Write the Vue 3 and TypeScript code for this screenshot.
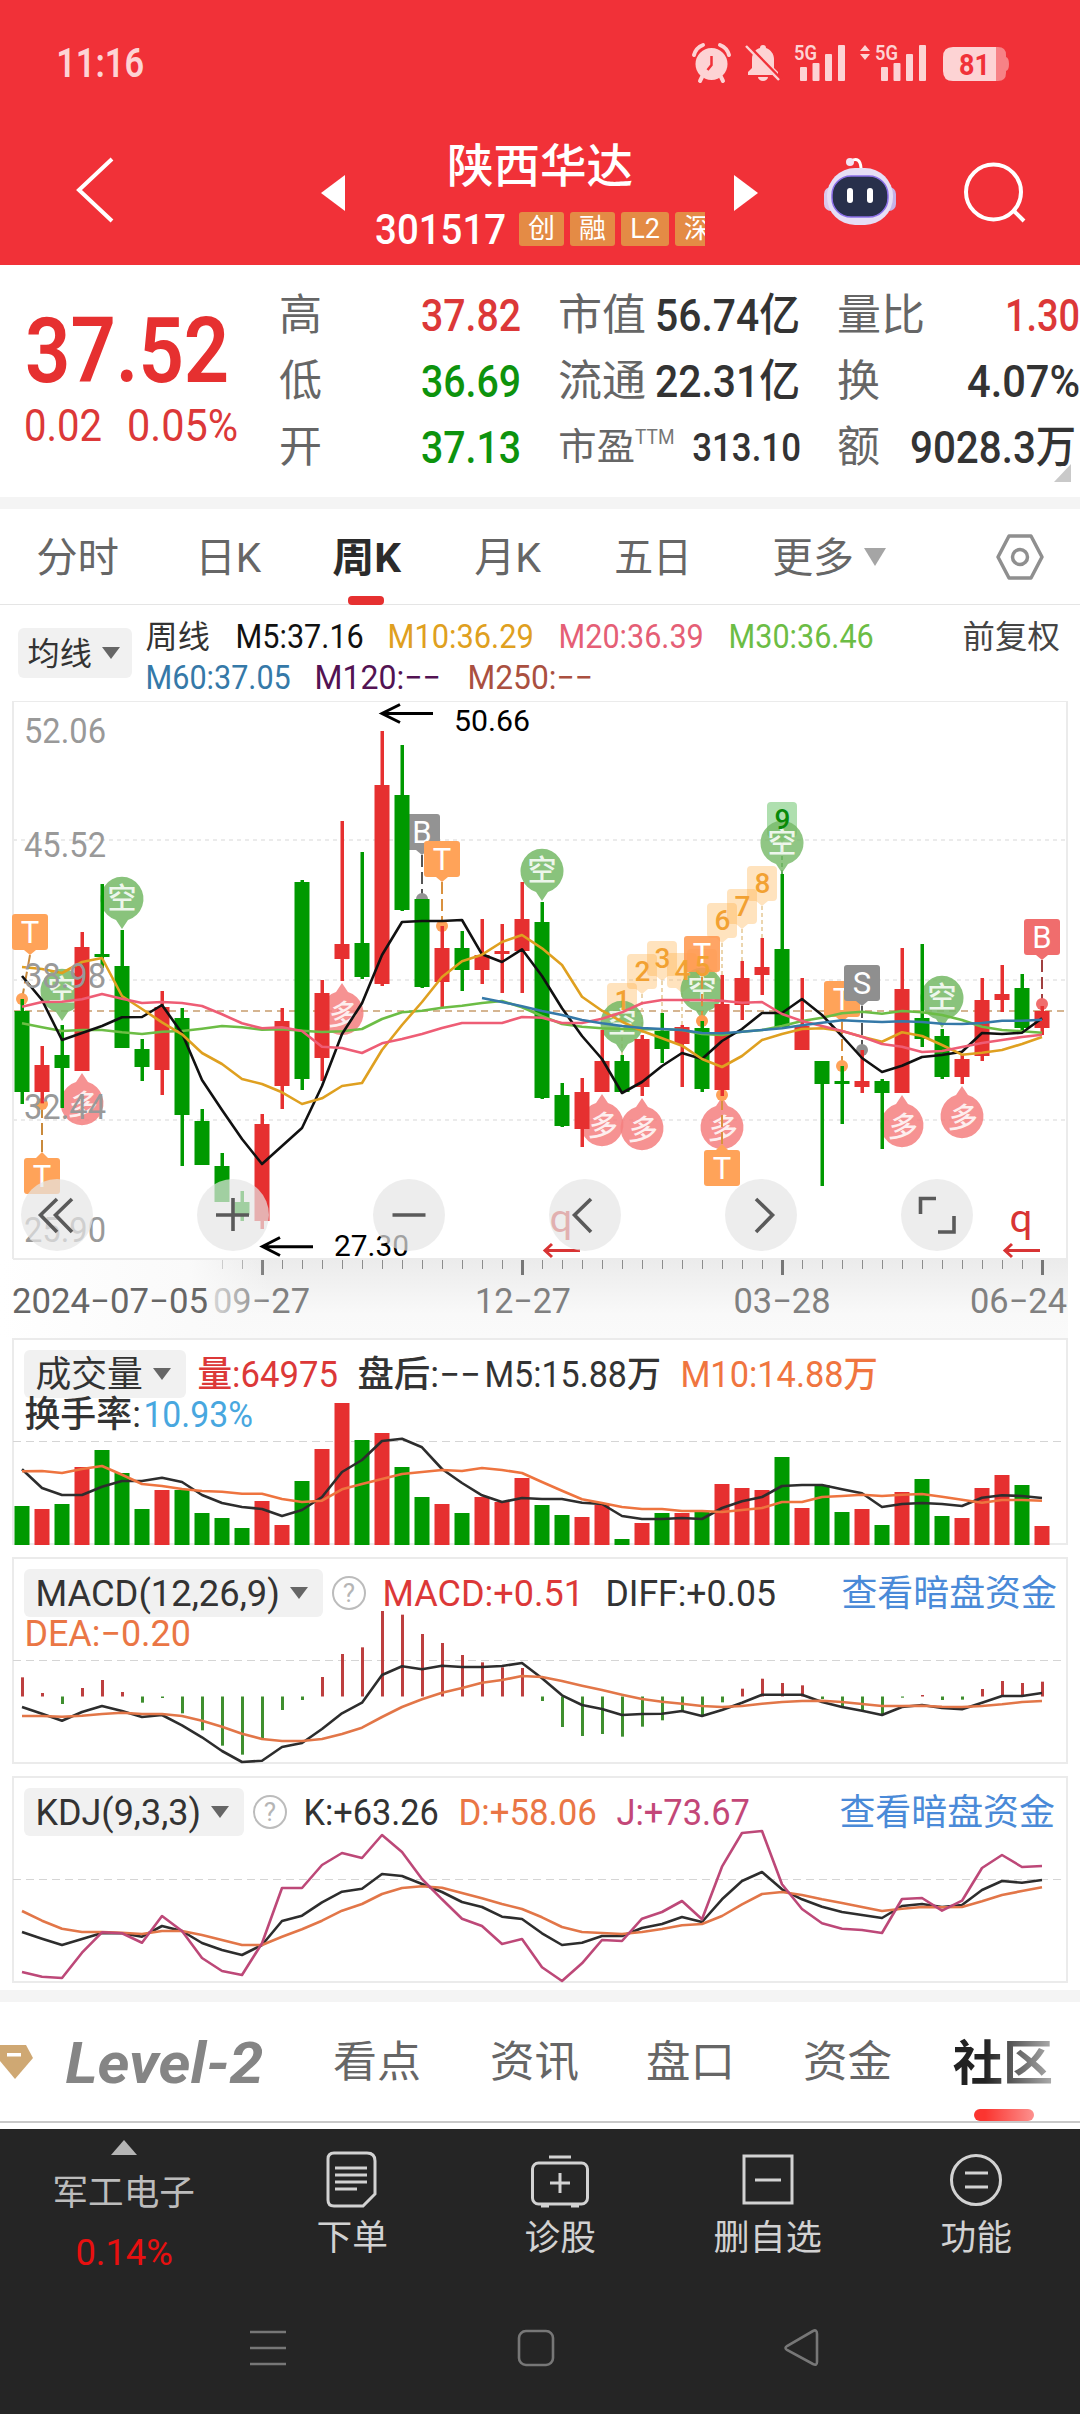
<script setup lang="ts">
import { h } from 'vue'

/* One line of text condensed or expanded to a given ink width, centred on its cap height. */
interface FitProps { t: string; w: number; s: number; ml?: number; c?: string; b?: number; it?: boolean }
const Fit = (p: FitProps) =>
  h('svg', {
    width: p.w, height: p.s,
    style: { marginLeft: (p.ml ?? 0) + 'px', overflow: 'visible', flex: 'none', display: 'block' },
  }, [
    h('text', {
      x: -p.s * 0.045, y: p.s * 0.865, textLength: p.w + p.s * 0.07, lengthAdjust: 'spacingAndGlyphs',
      'font-size': p.s, 'font-weight': p.b ?? 400, fill: p.c ?? '#333', 'font-style': p.it ? 'italic' : 'normal',
    }, p.t),
  ])
Fit.props = ['t', 'w', 's', 'ml', 'c', 'b', 'it']

const RED = '#e63030'
const GREEN = '#009900'
const X = (i: number) => 22 + 20 * i

/* g = falling, r = rising; then high, body top, body bottom, low in thirds of a pixel from y=900 */
type Candle = [string, number, number, number, number]
const raw: Candle[] = [
  ['g', 297, 333, 576, 612], ['r', 438, 495, 576, 610], ['g', 375, 465, 504, 624], ['r', 96, 141, 513, 513],
  ['g', -48, 162, 171, 204], ['g', 90, 198, 444, 444], ['g', 417, 447, 501, 543], ['r', 273, 321, 510, 585],
  ['g', 324, 354, 645, 798], ['g', 627, 663, 795, 795], ['g', 759, 798, 906, 906], ['g', 873, 906, 945, 963],
  ['r', 642, 672, 963, 987], ['r', 324, 363, 558, 627], ['g', -60, -54, 537, 570], ['r', 240, 279, 474, 543],
  ['r', -237, 132, 177, 243], ['g', -144, 129, 231, 237], ['r', -507, -345, 252, 258], ['g', -465, -315, 30, 33],
  ['g', -3, -3, 261, 264], ['r', 78, 144, 246, 321], ['g', 93, 144, 210, 273], ['r', 57, 165, 210, 252],
  ['r', 72, 153, 162, 279], ['r', -54, 57, 153, 279], ['g', 6, 66, 594, 597], ['g', 549, 585, 678, 681],
  ['r', 534, 576, 687, 741], ['r', 390, 483, 576, 576], ['g', 465, 483, 576, 576], ['r', 405, 417, 561, 588],
  ['g', 339, 393, 447, 489], ['r', 375, 381, 432, 561], ['g', 363, 384, 567, 576], ['r', 225, 312, 570, 588],
  ['r', 183, 234, 315, 360], ['r', 114, 201, 225, 285], ['g', -78, 147, 381, 381], ['r', 234, 378, 450, 450],
  ['g', 483, 483, 552, 858], ['g', 498, 543, 552, 672], ['r', 450, 543, 561, 579], ['g', 537, 543, 579, 747],
  ['r', 144, 267, 579, 579], ['g', 132, 354, 417, 441], ['g', 387, 408, 531, 537], ['r', 465, 477, 531, 552],
  ['r', 234, 300, 468, 483], ['r', 195, 282, 300, 336], ['g', 222, 264, 384, 390], ['r', 318, 333, 384, 405],
]
const candles = raw.map(([k, hi, t, b, lo], i) => ({
  x: X(i), c: k === 'r' ? RED : GREEN, hi: 900 + hi / 3, t: 900 + t / 3, b: 900 + b / 3, lo: 900 + lo / 3,
}))

const line = (base: number, v: number[], start = 0) =>
  v.map((n, i) => `${X(i + start)},${(base + n / 3).toFixed(1)}`).join(' ')

const averages = [
  { c: '#6cbd45', p: line(900, [370, 382, 393, 390, 390, 397, 402, 395, 393, 386, 378, 382, 389, 388, 392, 396, 394, 387, 357, 337, 332, 323, 317, 309, 303, 322, 348, 372, 380, 385, 387, 388, 388, 390, 402, 405, 395, 390, 378, 363, 353, 340, 335, 341, 333, 337, 345, 360, 380, 390, 394, 398]) },
  { c: '#111', p: line(900, [228, 300, 420, 399, 378, 352, 351, 315, 400, 540, 630, 717, 792, 738, 684, 558, 402, 310, 165, 66, 63, 63, 60, 163, 186, 148, 228, 325, 408, 477, 579, 546, 498, 459, 477, 423, 387, 339, 339, 297, 345, 408, 474, 516, 497, 471, 465, 455, 399, 402, 398, 355]) },
  { c: '#dfa020', p: line(900, [201, 207, 219, 186, 174, 288, 327, 367, 403, 459, 492, 537, 552, 577, 612, 595, 558, 549, 450, 375, 306, 231, 184, 164, 126, 105, 145, 195, 290, 332, 365, 393, 415, 437, 477, 501, 468, 420, 402, 387, 385, 393, 410, 425, 397, 408, 435, 464, 458, 450, 432, 411]) },
  { c: '#ee5d75', p: line(900, [320, 306, 305, 298, 282, 296, 309, 306, 309, 318, 343, 370, 385, 382, 393, 440, 444, 459, 430, 417, 402, 384, 369, 369, 369, 351, 353, 369, 369, 356, 337, 310, 300, 300, 300, 302, 308, 306, 342, 363, 378, 393, 410, 432, 440, 456, 453, 441, 429, 420, 411, 404]) },
  { c: '#3579a8', p: line(900, [294, 306, 319, 333, 345, 360, 370, 378, 384, 387, 390, 399, 400, 395, 390, 385, 376, 368, 361, 364, 366, 364, 366, 371, 372, 369, 362, 362, 359], 23) },
]

const volTops = [528, 537, 522, 411, 360, 429, 537, 480, 480, 549, 564, 594, 513, 585, 453, 357, 219, 330, 309, 411, 501, 522, 549, 501, 516, 444, 525, 555, 561, 525, 627, 579, 549, 549, 546, 462, 474, 480, 381, 534, 465, 546, 537, 585, 486, 447, 558, 564, 474, 435, 465, 588]
const volumes = volTops.map((v, i) => ({ x: X(i), y: 1330 + v / 3, c: candles[i].c }))
const vol5 = line(1330, [418, 474, 495, 495, 470, 453, 453, 443, 456, 495, 519, 531, 537, 558, 540, 501, 426, 390, 333, 326, 352, 417, 459, 496, 516, 504, 507, 507, 518, 522, 558, 567, 567, 564, 567, 534, 514, 501, 468, 465, 465, 478, 490, 531, 522, 519, 522, 528, 503, 496, 498, 504])
const vol10 = line(1330, [424, 423, 429, 417, 408, 434, 462, 468, 477, 483, 485, 491, 491, 507, 516, 512, 478, 462, 447, 432, 426, 420, 423, 414, 420, 429, 456, 482, 508, 519, 531, 537, 537, 543, 543, 546, 540, 534, 516, 516, 501, 498, 494, 498, 494, 492, 500, 509, 518, 510, 510, 512])

const macdEnds = [82, 129, 162, 114, 90, 126, 158, 144, 190, 241, 287, 314, 264, 180, 150, 81, 12, -8, -117, -106, -48, -21, 15, 37, 52, 54, 153, 231, 258, 252, 260, 230, 211, 185, 195, 157, 116, 86, 99, 106, 147, 172, 181, 192, 143, 135, 150, 149, 117, 93, 99, 95]
const macd = macdEnds.map((v, i) => ({ x: X(i) + 0.5, y: 1650 + v / 3, c: v < 139 ? '#bd3f3f' : '#3f8f2f' }))
const diff = line(1650, [171, 191, 212, 186, 168, 183, 201, 195, 226, 262, 303, 336, 332, 291, 279, 237, 190, 158, 75, 49, 58, 47, 51, 51, 48, 39, 85, 136, 165, 177, 195, 192, 191, 183, 198, 180, 158, 134, 134, 134, 156, 171, 182, 195, 171, 165, 174, 178, 158, 138, 138, 129])
const dea = line(1650, [198, 198, 200, 197, 192, 188, 192, 192, 198, 212, 230, 251, 267, 273, 273, 267, 252, 233, 201, 171, 148, 128, 114, 98, 90, 78, 81, 93, 107, 120, 134, 147, 155, 161, 168, 171, 168, 161, 156, 153, 152, 156, 162, 168, 168, 167, 170, 171, 168, 163, 156, 153])

const kdj = [
  { c: '#2d2d2d', p: line(1650, [846, 866, 885, 867, 849, 850, 860, 828, 843, 879, 900, 915, 885, 813, 797, 757, 725, 716, 672, 678, 702, 726, 756, 771, 800, 807, 850, 885, 878, 858, 858, 834, 822, 801, 816, 748, 693, 666, 718, 748, 770, 786, 795, 804, 768, 762, 771, 765, 720, 693, 698, 690]) },
  { c: '#e27648', p: line(1650, [783, 812, 836, 846, 846, 848, 852, 843, 843, 855, 870, 885, 885, 860, 838, 812, 782, 762, 732, 714, 709, 713, 729, 745, 762, 777, 802, 831, 846, 849, 852, 846, 837, 826, 822, 798, 763, 732, 726, 735, 748, 759, 771, 783, 776, 771, 772, 771, 754, 735, 723, 712]) },
  { c: '#bd4878', p: line(1650, [966, 980, 984, 908, 847, 850, 878, 798, 843, 924, 963, 975, 880, 714, 714, 645, 609, 624, 555, 606, 687, 748, 806, 828, 882, 867, 952, 993, 940, 870, 873, 806, 786, 753, 808, 650, 549, 543, 703, 777, 820, 836, 840, 849, 747, 744, 782, 752, 654, 615, 651, 648]) },
]

/* trade flags: letter, box centre, box top, pointer direction, anchor dot */
const flags = [
  { t: 'T', x: 30, y: 914, up: false, dx: 22, dy: 999, c: '#ffa359', l: '#c98a3c' },
  { t: 'T', x: 42, y: 1158, up: true, dx: 42, dy: 1104, c: '#ffa359', l: '#c98a3c' },
  { t: 'B', x: 422, y: 814, up: false, dx: 422, dy: 899, c: '#939393', l: '#555' },
  { t: 'T', x: 442, y: 841, up: false, dx: 442, dy: 926, c: '#ffa359', l: '#d9913f' },
  { t: 'T', x: 702, y: 936, up: false, dx: 702, dy: 1021, c: '#ff9950', l: '#d9913f' },
  { t: 'T', x: 722, y: 1150, up: true, dx: 722, dy: 1095, c: '#ffa359', l: '#d9913f' },
  { t: 'T', x: 842, y: 981, up: false, dx: 842, dy: 1066, c: '#ffa359', l: '#d9913f' },
  { t: 'S', x: 862, y: 965, up: false, dx: 862, dy: 1050, c: '#8f8f8f', l: '#555' },
  { t: 'B', x: 1042, y: 919, up: false, dx: 1042, dy: 1004, c: '#f06d6d', l: '#a04040' },
]
const pins = [
  { t: '空', x: 62, y: 990 }, { t: '空', x: 122, y: 898 }, { t: '空', x: 542, y: 870 }, { t: '空', x: 622, y: 1022 },
  { t: '空', x: 702, y: 989 }, { t: '空', x: 942, y: 997 },
  { t: '多', x: 82, y: 1104 }, { t: '多', x: 342, y: 1014 }, { t: '多', x: 602, y: 1125 }, { t: '多', x: 642, y: 1129 },
  { t: '多', x: 722, y: 1128 }, { t: '多', x: 902, y: 1126 }, { t: '多', x: 962, y: 1117 }, { t: '空', x: 782, y: 842 },
]
const counts = [983, 954, 941, 953, 949, 903, 889, 866, 802].map((y, i) => ({ n: i + 1, x: 622 + 20 * i, y, to: candles[30 + i].hi }))
const ticks = Array.from({ length: 42 }, (_, k) => k + 10)
const scale = [['52.06', 743], ['45.52', 857], ['38.98', 988], ['32.44', 1119], ['25.90', 1242]] as [string, number][]
const buttons = [57, 233, 409, 585, 761, 937]
</script>

<template>
  <div class="app">
    <header class="head">
      <div class="status">
        <Fit t="11:16" :w="85" :s="41" :ml="58" c="#fdd3d4" :b="600" />
        <svg class="sysicons" width="330" height="50" viewBox="690 38 330 50" fill="#fdd3d4">
          <circle cx="711.500" cy="64" r="16" />
          <path d="M694 55a15 15 0 0 1 9-10M729 55a15 15 0 0 0-9-10" stroke="#fdd3d4" stroke-width="4" fill="none" stroke-linecap="round" />
          <path d="M702 77l-2 4M721 77l2 4" stroke="#fdd3d4" stroke-width="4" stroke-linecap="round" />
          <path d="M711.500 56v9l-4 5" stroke="#f13138" stroke-width="2.500" fill="none" />
          <path d="M748 75v-3l4-4v-9c0-6 4-10 8-11a3 3 0 0 1 6 0c5 2 8 6 8 11v9l4 4v3zM758 77h10a5 4 0 0 1-10 0z" />
          <path d="M748 46l33 34" stroke="#f13138" stroke-width="4" />
          <path d="M746 46l33 34" stroke="#fdd3d4" stroke-width="2.500" />
          <g v-for="o in [0, 81]" :key="o">
            <text :x="794 + o" y="60" font-size="20" font-weight="600" textLength="23" lengthAdjust="spacingAndGlyphs">5G</text>
            <rect :x="800 + o" y="67" width="7" height="14" rx="1" />
            <rect :x="812.500 + o" y="63" width="7" height="18" rx="1" />
            <rect :x="825 + o" y="54" width="7" height="27" rx="1" />
            <rect :x="838 + o" y="45" width="7" height="36" rx="1" />
          </g>
          <path d="M865 45l5 6h-10zM865 60l5-6h-10z" />
          <path d="M996 47h2q8 0 8 8v2q3 1 3 7t-3 7v2q0 8-8 8h-2z" opacity=".5" />
          <path d="M953 47h43v34h-43q-10 0-10-10V57q0-10 10-10z" />
          <text x="959" y="75" font-size="30" font-weight="700" fill="#f13138" textLength="31" lengthAdjust="spacingAndGlyphs">81</text>
        </svg>
      </div>
      <div class="titlebar">
        <svg width="40" height="70" viewBox="0 0 40 70" class="back"><path d="M36 4L3 35l33 31" fill="none" stroke="#fff" stroke-width="4" /></svg>
        <svg width="24" height="36" viewBox="0 0 24 36" class="prev"><path d="M24 0v36L0 18z" fill="#fff" /></svg>
        <div class="name">
          <Fit t="陕西华达" :w="183" :s="46" :ml="72" c="#fff" :b="500" />
          <div class="code">
            <Fit t="301517" :w="128" :s="42" c="#fff" :b="500" />
            <div class="tags">
              <span>创</span><span>融</span><span class="wide">L2</span><span>深</span>
            </div>
          </div>
        </div>
        <svg width="24" height="36" viewBox="0 0 24 36" class="next"><path d="M0 0v36l24-18z" fill="#fff" /></svg>
        <svg class="robot" width="72" height="70" viewBox="0 0 72 70">
          <path d="M27 5q9-5 10 7" fill="none" stroke="#fff" stroke-width="3" /><circle cx="26" cy="6" r="4" fill="#f3e4f4" />
          <rect x="0" y="31" width="14" height="24" rx="7" fill="#dbc8ec" /><rect x="58" y="31" width="14" height="24" rx="7" fill="#c5b2e8" />
          <rect x="3" y="12" width="66" height="57" rx="28" fill="#e6def5" />
          <rect x="8" y="20" width="56" height="41" rx="19" fill="#28304b" stroke="#8b6fe8" stroke-width="1.500" />
          <rect x="23" y="32" width="6" height="15" rx="3" fill="#fff" /><rect x="43" y="32" width="6" height="15" rx="3" fill="#fff" />
        </svg>
        <svg class="search" width="64" height="64" viewBox="963 160 64 64"><circle cx="994.500" cy="192" r="27.500" fill="none" stroke="#fff" stroke-width="4" /><path d="M1014 210l11 11" stroke="#fff" stroke-width="4" /></svg>
      </div>
    </header>

    <section class="quote">
      <div class="price">
        <Fit t="37.52" :w="198" :s="90" :ml="29" c="#e63030" :b="600" />
        <div class="row chg"><Fit t="0.02" :w="75" :s="45" :ml="26" c="#dc3838" :b="450" /><Fit t="0.05%" :w="108" :s="45" :ml="28" c="#dc3838" :b="450" /></div>
      </div>
      <div class="stats">
        <div class="row">
          <Fit t="高" :w="40" :s="43" c="#666" /><Fit t="37.82" :w="97" :s="45" :ml="102" c="#dc3838" :b="500" />
          <Fit t="市值" :w="85" :s="43" :ml="40" c="#666" /><Fit t="56.74亿" :w="142" :s="45" :ml="12" :b="500" />
          <Fit t="量比" :w="85" :s="43" :ml="40" c="#666" /><Fit t="1.30" :w="72" :s="45" :ml="83" c="#dc3838" :b="500" />
        </div>
        <div class="row">
          <Fit t="低" :w="40" :s="43" c="#666" /><Fit t="36.69" :w="97" :s="45" :ml="102" c="#0d930d" :b="500" />
          <Fit t="流通" :w="85" :s="43" :ml="40" c="#666" /><Fit t="22.31亿" :w="142" :s="45" :ml="12" :b="500" />
          <Fit t="换" :w="40" :s="43" :ml="40" c="#666" /><Fit t="4.07%" :w="110" :s="45" :ml="90" :b="500" />
        </div>
        <div class="row">
          <Fit t="开" :w="40" :s="43" c="#666" /><Fit t="37.13" :w="97" :s="45" :ml="102" c="#0d930d" :b="500" />
          <Fit t="市盈" :w="74" :s="37" :ml="40" c="#666" /><Fit class="sup" t="TTM" :w="38" :s="20" :ml="2" c="#777" /><Fit t="313.10" :w="106" :s="39" :ml="20" :b="500" />
          <Fit t="额" :w="40" :s="43" :ml="39" c="#666" /><Fit t="9028.3万" :w="163" :s="45" :ml="33" :b="500" />
        </div>
      </div>
      <i class="corner"></i>
    </section>

    <nav class="period">
      <Fit t="分时" :w="80" :s="41" :ml="38" c="#666" />
      <Fit t="日K" :w="63" :s="41" :ml="79" c="#666" />
      <span class="on"><Fit t="周K" :w="66" :s="41" c="#2b2b2b" :b="700" /></span>
      <Fit t="月K" :w="64" :s="41" :ml="76" c="#666" />
      <Fit t="五日" :w="75" :s="41" :ml="76" c="#666" />
      <Fit t="更多" :w="79" :s="41" :ml="83" c="#666" />
      <svg class="more" width="22" height="18" viewBox="0 0 22 18"><path d="M0 0h22L11 18z" fill="#a5a5a5" /></svg>
      <svg class="hex" width="50" height="48" viewBox="0 0 50 48" fill="none" stroke="#8f8f8f" stroke-width="3.500"><path d="M14 3h22l11 21-11 21H14L3 24z" stroke-linejoin="round" /><circle cx="25" cy="24" r="7.500" /></svg>
    </nav>

    <div class="legend">
      <div class="pick ma"><Fit t="均线" :w="62" :s="32" /><i class="tri"></i></div>
      <div class="lines">
        <div class="row">
          <Fit t="周线" :w="62" :s="32" /><Fit t="M5:37.16" :w="126" :s="33" :ml="28" c="#111" :b="450" />
          <Fit t="M10:36.29" :w="144" :s="33" :ml="26" c="#dfa020" :b="450" /><Fit t="M20:36.39" :w="143" :s="33" :ml="27" c="#e55f76" :b="450" />
          <Fit t="M30:36.46" :w="143" :s="33" :ml="27" c="#6cbd45" :b="450" /><Fit t="前复权" :w="95" :s="32" :ml="91" c="#444" />
        </div>
        <div class="row">
          <Fit t="M60:37.05" :w="143" :s="33" c="#3579a8" :b="450" /><Fit t="M120:−−" :w="124" :s="33" :ml="26" c="#531353" :b="450" />
          <Fit t="M250:−−" :w="123" :s="33" :ml="29" c="#aa5040" :b="450" />
        </div>
      </div>
    </div>

    <svg class="chart" width="1080" height="637" viewBox="0 701 1080 637">
      <defs>
        <linearGradient id="axis" x1="0" y1="0" x2="0" y2="1"><stop offset="0" stop-color="#ebebeb" /><stop offset=".7" stop-color="#f9f9f9" /><stop offset="1" stop-color="#fafafa" /></linearGradient>
        <linearGradient id="fade"><stop offset="0" stop-color="#fff" /><stop offset=".7" stop-color="#fafafa" /><stop offset="1" stop-color="#fafafa" stop-opacity="0" /></linearGradient>
      </defs>
      <rect x="13" y="1259" width="1055" height="79" fill="url(#axis)" />
      <g stroke="#e5e5e5" stroke-width="1.500" stroke-dasharray="4 4"><path d="M13 840H1066M13 980H1066M13 1120H1066" /></g>
      <path d="M13 1011H1066" stroke="#c79d6e" stroke-width="1.500" stroke-dasharray="7 5" />
      <path d="M13 1259V701H1067V1259H13" fill="none" stroke="#ebebeb" stroke-width="2" />

      <g v-for="c in counts" :key="'n' + c.n">
        <path :d="`M${c.x} ${c.y + 40}V${c.to}`" :stroke="c.n === 9 ? '#2b8b2b' : '#e5c894'" stroke-width="1.500" stroke-dasharray="4 3" />
        <path :d="`M${c.x - 11} ${c.y}h22q4 0 4 4v27q0 4-4 4h-5l-6 5-6-5h-5q-4 0-4-4v-27q0-4 4-4z`" :fill="c.n === 9 ? '#afdfaf' : '#ffa735'" :opacity="c.n === 9 ? 1 : .32" />
      </g>
      <g v-for="(p, i) in pins" :key="'p' + i">
        <g :opacity="p.x === 782 ? .8 : .85">
          <path v-if="p.t === '空'" :d="`M${p.x} ${p.y + 31}l-6 -9a21.500 22 0 1 1 12 0z`" fill="#74b865" />
          <path v-else :d="`M${p.x} ${p.y - 31}l-6 9a21.500 22 0 1 0 12 0z`" fill="#f57f7f" />
        </g>
        <text :transform="`translate(${p.x} ${p.y + 10.5}) skewX(${p.t === '多' ? -8 : 0})`" font-size="29" font-weight="500" fill="#fff" opacity=".85" text-anchor="middle">{{ p.t }}</text>
      </g>
      <g v-for="(f, i) in flags" :key="'f' + i">
        <path :d="`M${f.x} ${f.up ? f.y - 6 : f.y + 41}L${f.dx} ${f.dy}`" :stroke="f.l" stroke-width="2" stroke-dasharray="12 5" />
        <circle :cx="f.dx" :cy="f.dy" r="6" :fill="f.c" />
        <g :opacity="f.x === 702 ? .88 : 1">
          <rect :x="f.x - 18" :y="f.y" width="36" height="36" rx="3" :fill="f.c" />
          <path :d="f.up ? `M${f.x - 6} ${f.y}l6-6 6 6z` : `M${f.x - 6} ${f.y + 36}l6 5 6-5z`" :fill="f.c" />
        </g>
        <text :x="f.x" :y="f.y + 28.500" font-size="31" fill="#fff" text-anchor="middle">{{ f.t }}</text>
      </g>
      <text v-for="c in counts" :key="'t' + c.n" :x="c.x + .5" :y="c.y + 27" font-size="28" font-weight="500" text-anchor="middle" :fill="c.n === 9 ? '#088a08' : '#f2a132'">{{ c.n }}</text>

      <g v-for="(c, i) in candles" :key="i" :fill="c.c">
        <rect :x="c.x - 1.500" :y="c.hi" width="3.500" :height="c.lo - c.hi" />
        <rect :x="c.x - 7.500" :y="c.t" width="15" :height="c.b - c.t" />
      </g>
      <polyline v-for="(a, i) in averages" :key="'a' + i" :points="a.p" :stroke="a.c" fill="none" stroke-width="2.600" stroke-linejoin="round" />

      <g fill="#999" font-size="35.500" font-weight="450">
        <text v-for="s in scale" :key="s[0]" x="24" :y="s[1]" textLength="82" lengthAdjust="spacingAndGlyphs">{{ s[0] }}</text>
      </g>
      <g stroke="#000" stroke-width="3" fill="none">
        <path d="M433 713.500H382M400 704.500l-18 9 18 9M313 1246.700H262.500M280 1237.500l-17.500 9 17.500 9" />
      </g>
      <g font-size="30" fill="#000">
        <text x="454" y="730.700" textLength="76" lengthAdjust="spacingAndGlyphs">50.66</text>
        <text x="334" y="1255.500" textLength="75" lengthAdjust="spacingAndGlyphs">27.30</text>
      </g>
      <g fill="#d83434">
        <text x="549.500" y="1232" font-size="38" textLength="23" lengthAdjust="spacingAndGlyphs">q</text><text x="1009.500" y="1232" font-size="38" textLength="23" lengthAdjust="spacingAndGlyphs">q</text>
        <path d="M580 1250.500H545M552 1244l-7 6.500 7 6.500M1040 1250.500H1005M1012 1244l-7 6.500 7 6.500" stroke="#d83434" stroke-width="3" fill="none" />
      </g>

      <circle v-for="b in buttons" :key="b" :cx="b" cy="1215" r="36" fill="#e5e5e5" opacity=".7" />
      <g stroke="#5a5a5a" stroke-width="3.600" fill="none">
        <path d="M57 1199l-16.500 16 16.500 17M72 1199l-16.500 16 16.500 17M216 1215h33M233 1198v33M392.500 1215h33M591 1199l-16.500 16 16.500 17M756 1199l16.500 16-16.500 17M920.500 1214v-15.500H936M954 1216v16H938" />
      </g>

      <path v-for="i in ticks" :key="'k' + i" :d="`M${X(i) + .5} 1260v${(i - 12) % 13 ? 9 : 15}`" :stroke="(i - 12) % 13 ? '#8c8c8c' : '#777'" :stroke-width="(i - 12) % 13 ? 1 : 3" />
      <g font-size="34.500" font-weight="450" fill="#808080">
        <text x="213" y="1312.700" textLength="97" lengthAdjust="spacingAndGlyphs">09−27</text>
        <text x="475" y="1312.700" textLength="96" lengthAdjust="spacingAndGlyphs">12−27</text>
        <text x="733.500" y="1312.700" textLength="97" lengthAdjust="spacingAndGlyphs">03−28</text>
        <text x="970" y="1312.700" textLength="97" lengthAdjust="spacingAndGlyphs">06−24</text>
        <rect x="0" y="1260" width="270" height="78" fill="url(#fade)" />
        <text x="12" y="1312.700" fill="#666" textLength="196" lengthAdjust="spacingAndGlyphs">2024−07−05</text>
      </g>
    </svg>

    <section class="panel">
      <svg class="plot" width="1080" height="207" viewBox="0 1338 1080 207">
        <path d="M13 1544V1339H1067V1544z" fill="#fff" stroke="#ebebeb" stroke-width="2" />
        <path d="M13 1441.500H1066" stroke="#d5d5d5" stroke-dasharray="8 5" />
        <rect v-for="v in volumes" :key="v.x" :x="v.x - 7.500" :y="v.y" width="15" :height="1545 - v.y" :fill="v.c" />
        <polyline :points="vol5" stroke="#2d2d2d" class="ln" /><polyline :points="vol10" stroke="#ee743f" class="ln" />
      </svg>
      <div class="caption">
        <div class="row first">
          <div class="pick"><Fit t="成交量" :w="105" :s="36" /><i class="tri"></i></div>
          <Fit t="量:64975" :w="138" :s="36" :ml="13" c="#dc3838" :b="450" /><Fit t="盘后:−−" :w="121" :s="36" :ml="22" :b="450" />
          <Fit t="M5:15.88万" :w="174" :s="36" :ml="6" :b="450" /><Fit t="M10:14.88万" :w="195" :s="36" :ml="22" c="#f0753f" :b="450" />
        </div>
        <div class="row second"><Fit t="换手率:" :w="114" :s="36" :ml="2" :b="450" /><Fit t="10.93%" :w="107" :s="36" :ml="5" c="#48a7df" :b="450" /></div>
      </div>
    </section>

    <section class="panel macd">
      <svg class="plot" width="1080" height="207" viewBox="0 1557 1080 207">
        <path d="M13 1763V1558H1067V1763z" fill="#fff" stroke="#ebebeb" stroke-width="2" />
        <path d="M13 1660.500H1066" stroke="#d5d5d5" stroke-dasharray="8 5" />
        <path v-for="m in macd" :key="m.x" :d="`M${m.x} 1696.500V${m.y}`" :stroke="m.c" stroke-width="3" />
        <polyline :points="diff" stroke="#2d2d2d" class="ln" /><polyline :points="dea" stroke="#e27648" class="ln" />
      </svg>
      <div class="caption">
        <div class="row first">
          <div class="pick"><Fit t="MACD(12,26,9)" :w="242" :s="36" :b="450" /><i class="tri"></i></div>
          <span class="help">?</span>
          <Fit t="MACD:+0.51" :w="199" :s="36" :ml="18" c="#dc3838" :b="450" /><Fit t="DIFF:+0.05" :w="168" :s="36" :ml="24" :b="450" />
          <Fit t="查看暗盘资金" :w="213" :s="36" :ml="68" c="#4a8ad8" />
        </div>
        <div class="row second"><Fit t="DEA:−0.20" :w="164" :s="36" :ml="2" c="#ea7645" :b="450" /></div>
      </div>
    </section>

    <section class="panel">
      <svg class="plot" width="1080" height="207" viewBox="0 1776 1080 207">
        <path d="M13 1982V1777H1067V1982z" fill="#fff" stroke="#ebebeb" stroke-width="2" />
        <path d="M13 1879.500H1066" stroke="#d5d5d5" stroke-dasharray="8 5" />
        <polyline v-for="k in kdj" :key="k.c" :points="k.p" :stroke="k.c" class="ln" />
      </svg>
      <div class="caption">
        <div class="row first">
          <div class="pick"><Fit t="KDJ(9,3,3)" :w="163" :s="36" :b="450" /><i class="tri"></i></div>
          <span class="help">?</span>
          <Fit t="K:+63.26" :w="133" :s="36" :ml="18" :b="450" /><Fit t="D:+58.06" :w="136" :s="36" :ml="22" c="#ea7645" :b="450" />
          <Fit t="J:+73.67" :w="131" :s="36" :ml="22" c="#c34778" :b="450" /><Fit t="查看暗盘资金" :w="213" :s="36" :ml="92" c="#4a8ad8" />
        </div>
      </div>
    </section>

    <nav class="more-tabs">
      <svg width="34" height="38" viewBox="0 0 34 38"><path d="M0 2h26l7 13-18 21L0 18z" fill="#cfa873" /><rect x="7" y="10" width="14" height="3.500" fill="#fff" /></svg>
      <Fit t="Level-2" :w="194" :s="58" :ml="34" c="#858585" :b="700" :it="true" />
      <Fit t="看点" :w="85" :s="43" :ml="73" c="#666" /><Fit t="资讯" :w="86" :s="43" :ml="72" c="#666" />
      <Fit t="盘口" :w="86" :s="43" :ml="70" c="#666" /><Fit t="资金" :w="86" :s="43" :ml="71" c="#666" />
      <span class="community"><Fit t="社区" :w="97" :s="48" c="#222" :b="700" /></span>
    </nav>

    <footer class="dock">
      <div class="actions">
        <div class="sector"><i></i><Fit t="军工电子" :w="140" :s="35" c="#bcbcbc" /><Fit t="0.14%" :w="95" :s="36" c="#e81010" /></div>
        <div class="act order"><svg width="52" height="58" viewBox="0 0 52 58"><path d="M8 2h33q8 0 8 8v33L37 55H8q-6 0-6-6V8q0-6 6-6z" /><path d="M9 17h32M9 24h32M9 31h32M9 38h22" /></svg><Fit t="下单" :w="69" :s="35" c="#d2d2d2" /></div>
        <div class="act"><svg width="60" height="58" viewBox="0 0 60 58"><rect x="2.500" y="12" width="55" height="41" rx="6" /><path d="M19 6h22M30 22v20M20 32h20M11 55h8M41 55h8" /></svg><Fit t="诊股" :w="69" :s="35" c="#d2d2d2" /></div>
        <div class="act"><svg width="52" height="58" viewBox="0 0 52 58"><path d="M2 5h48v47H2zM13 29h26" /></svg><Fit t="删自选" :w="106" :s="35" c="#d2d2d2" /></div>
        <div class="act"><svg width="54" height="58" viewBox="0 0 54 58"><circle cx="27" cy="29" r="24.500" /><path d="M16 22h23M16 36h23" /></svg><Fit t="功能" :w="69" :s="35" c="#d2d2d2" /></div>
      </div>
      <div class="sysnav">
        <svg width="36" height="38" viewBox="0 0 36 38"><path d="M0 3h36M0 19h36M0 35h36" /></svg>
        <svg width="38" height="38" viewBox="0 0 38 38"><rect x="2" y="2" width="34" height="34" rx="7" /></svg>
        <svg width="38" height="38" viewBox="0 0 38 38"><path d="M34 5v28q0 4-4 2L4 21q-3-2 0-4L30 2q4-2 4 3z" /></svg>
      </div>
    </footer>
  </div>
</template>

<style>
body { margin: 0; background: #fff; }
</style>
<style scoped>
.app { width: 1080px; height: 2414px; overflow: hidden; display: flex; flex-direction: column; background: #fff; font-family: Roboto, "Noto Sans CJK SC", sans-serif; color: #333; }
.app svg { display: block; flex: none; }
.row { display: flex; align-items: center; }
.head { height: 265px; background: #f13138; flex: none; }
.status { height: 125px; display: flex; align-items: center; justify-content: space-between; }
.sysicons { margin-right: 60px; }
.titlebar { height: 140px; display: flex; align-items: flex-start; }
.back { margin: 30px 0 0 76px; }
.prev { margin: 50px 0 0 205px; }
.name { margin-left: 32px; padding-top: 17px; width: 328px; }
.code { display: flex; align-items: center; height: 34px; margin-top: 24px; }
.tags { margin-left: 14px; width: 186px; display: flex; gap: 6px; overflow: hidden; }
.tags span { flex: none; width: 45px; height: 34px; line-height: 34px; border-radius: 3px; background: #e48b45; color: #fff; font-size: 27px; text-align: center; }
.tags .wide { width: 48px; }
.next { margin: 50px 0 0 29px; }
.robot { margin: 31px 0 0 66px; }
.search { margin: 35px 0 0 66px; }
.quote { height: 232px; flex: none; display: flex; border-bottom: 12px solid #f4f4f4; position: relative; overflow: hidden; }
.price { width: 281px; padding-top: 39px; }
.chg { margin-top: 8px; }
.stats { display: flex; flex-direction: column; gap: 1px; padding-top: 17px; }
.stats .row { height: 65px; }
.sup { align-self: flex-start; margin-top: 13px; }
.corner { position: absolute; left: 1054px; top: 199px; border-left: 17px solid transparent; border-bottom: 18px solid #c9c9c9; }
.period { height: 95px; flex: none; display: flex; align-items: center; border-bottom: 1px solid #e5e5e5; }
.period > svg:not(.more):not(.hex), .on > svg { position: relative; top: 1px; }
.on { margin-left: 74px; height: 95px; display: flex; align-items: center; position: relative; }
.on::after { content: ""; position: absolute; left: 14px; bottom: -1px; width: 36px; height: 9px; border-radius: 4px; background: #e63030; }
.more { margin-left: 11px; }
.hex { margin-left: 109px; }
.legend { height: 96px; flex: none; display: flex; }
.pick { background: #f1f1f1; border-radius: 6px; height: 48px; padding: 0 15px 0 13px; display: flex; align-items: center; flex: none; }
.ma { margin: 23px 0 0 18px; height: 50px; width: 114px; box-sizing: border-box; padding: 0 0 0 11px; }
.tri { border: 9px solid transparent; border-top: 12px solid #666; border-bottom: 0; margin-left: 11px; }
.lines { margin-left: 15px; padding-top: 10px; }
.lines .row { height: 41px; }
.chart text, .sysicons text { font-family: Roboto, "Noto Sans CJK SC", sans-serif; }
.panel { height: 207px; flex: none; margin-bottom: 12px; display: grid; }
.plot, .caption { grid-area: 1 / 1; }
.caption { padding: 12px 0 0 24px; z-index: 1; }
.first { height: 48px; }
.second { height: 32px; }
.ln { fill: none; stroke-width: 2.6; stroke-linejoin: round; }
.help { width: 30px; height: 30px; border: 2.5px solid #bcbcbc; border-radius: 50%; margin-left: 9px; color: #b5b5b5; font-size: 26px; line-height: 31px; text-align: center; flex: none; }
.more-tabs { margin-top: -5px; border-top: 12px solid #f4f4f4; border-bottom: 2px solid #c9c9c9; height: 119px; flex: none; display: flex; align-items: center; }
.community { margin-left: 64px; position: relative; height: 119px; display: flex; align-items: center; }
.community::before { content: ""; position: absolute; z-index: 1; left: 30px; top: 20px; width: 90px; height: 99px; background: linear-gradient(90deg, #fff0, #ffffffa0 75%, #fffffff0); }
.community::after { content: ""; position: absolute; left: 19px; bottom: 0; width: 60px; height: 12px; border-radius: 6px; background: #fb3530; }
.dock { margin-top: 6px; background: #252525; height: 286px; }
.actions { height: 162px; display: flex; }
.sector { width: 140px; margin-left: 54px; display: flex; flex-direction: column; align-items: center; }
.sector i { border: 13px solid transparent; border-bottom: 15px solid #b5b5b5; border-top: 0; margin: 11px 0 20px; }
.sector svg + svg { margin-top: 24px !important; }
.act { width: 208px; padding-top: 22px; display: flex; flex-direction: column; align-items: center; gap: 11px; }
.order { margin-left: 54px; }
.act > svg:first-child { fill: none; stroke: #d2d2d2; stroke-width: 3; }
.sysnav { display: flex; padding: 38px 0 0 250px; }
.sysnav svg { fill: none; stroke: #777; stroke-width: 2.6; }
.sysnav svg + svg { margin-left: 231px; }
.sysnav svg:last-child { margin-left: 228px; }
</style>
